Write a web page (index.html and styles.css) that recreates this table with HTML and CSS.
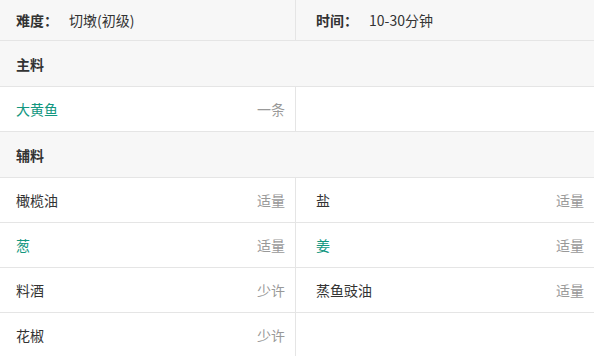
FILE: index.html
```html
<!DOCTYPE html>
<html lang="zh-CN">
<head>
<meta charset="utf-8">
<link rel="stylesheet" href="styles.css">
</head>
<body>
<div class="table">
  <div class="row info">
    <div class="cell left"><span class="label">难度：</span><span class="val">切墩(初级)</span></div>
    <div class="cell right"><span class="label">时间：</span><span class="val">10-30分钟</span></div>
  </div>
  <div class="row section"><div class="cell full">主料</div></div>
  <div class="row">
    <div class="cell left"><span class="name green">大黄鱼</span><span class="amt">一条</span></div>
    <div class="cell right"></div>
  </div>
  <div class="row section"><div class="cell full">辅料</div></div>
  <div class="row">
    <div class="cell left"><span class="name">橄榄油</span><span class="amt">适量</span></div>
    <div class="cell right"><span class="name">盐</span><span class="amt">适量</span></div>
  </div>
  <div class="row">
    <div class="cell left"><span class="name green">葱</span><span class="amt">适量</span></div>
    <div class="cell right"><span class="name green">姜</span><span class="amt">适量</span></div>
  </div>
  <div class="row">
    <div class="cell left"><span class="name">料酒</span><span class="amt">少许</span></div>
    <div class="cell right"><span class="name">蒸鱼豉油</span><span class="amt">适量</span></div>
  </div>
  <div class="row">
    <div class="cell left"><span class="name">花椒</span><span class="amt">少许</span></div>
    <div class="cell right"></div>
  </div>
</div>
</body>
</html>
```
FILE: styles.css
```css
html, body {
  margin: 0;
  padding: 0;
  background: #fff;
}
body {
  font-family: "Noto Sans CJK SC", "Microsoft YaHei", sans-serif;
  font-size: 14px;
  color: #333;
  width: 594px;
}
.table {
  display: flex;
  flex-direction: column;
}
.row {
  display: flex;
  height: 44px;
  border-bottom: 1px solid #e5e5e5;
}
.row.info {
  height: 40px;
  background: #f7f7f7;
}
.row.section {
  height: 45px;
  background: #f7f7f7;
}
.cell {
  display: flex;
  align-items: center;
  box-sizing: border-box;
}
.cell.left {
  width: 296px;
  border-right: 1px solid #e5e5e5;
  padding: 0 10px 0 16px;
}
.cell.right {
  flex: 1;
  padding: 0 10px 0 20px;
}
.cell.full {
  flex: 1;
  padding-left: 16px;
  font-weight: bold;
}
.label {
  font-weight: bold;
  margin-right: 11px;
}
.name {
  flex: 1;
}
.green {
  color: #12977f;
}
.amt {
  color: #999;
}
```
